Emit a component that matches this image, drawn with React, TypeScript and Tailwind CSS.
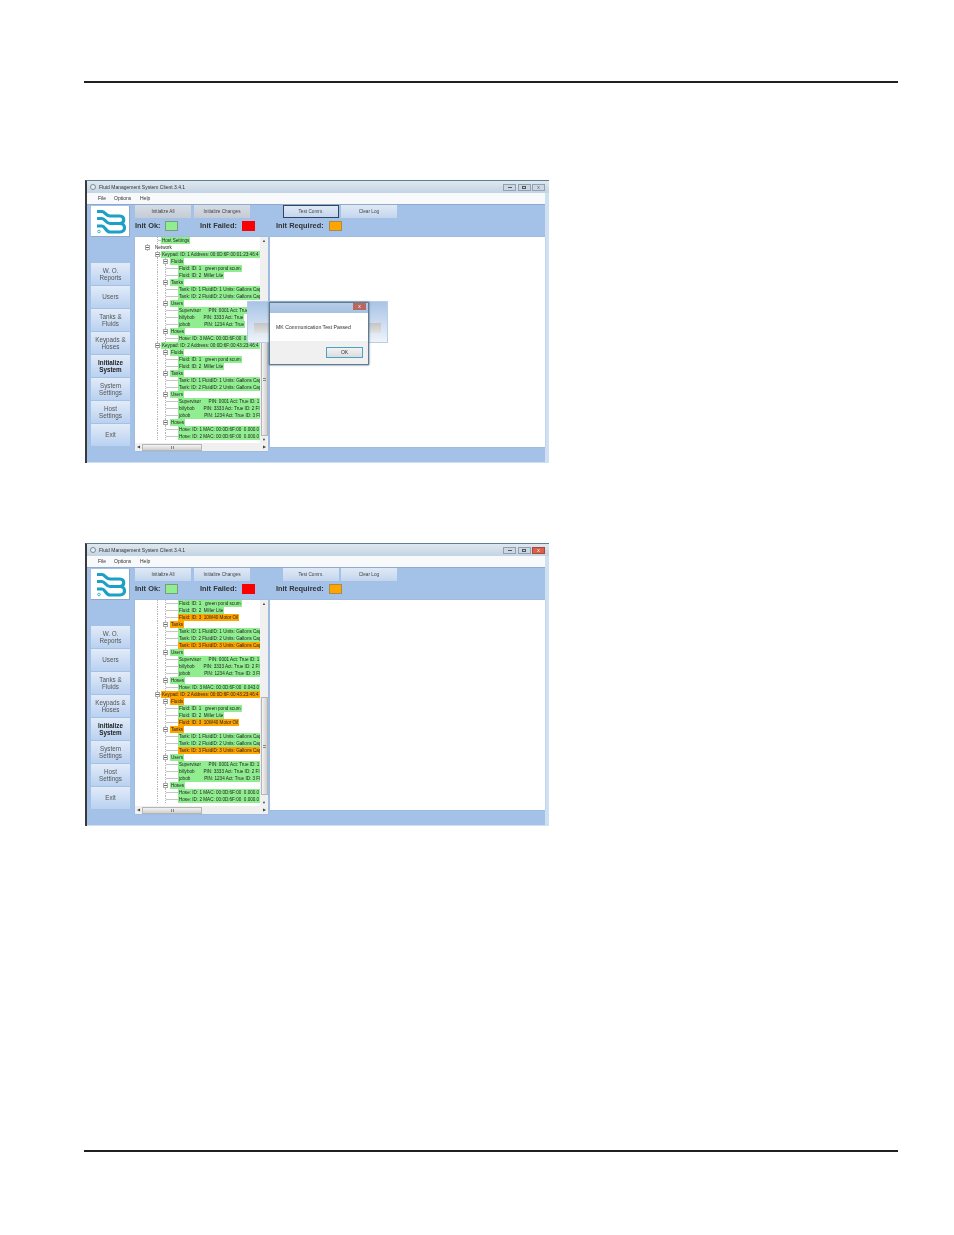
type Row = { lvl: number; text: string; color?: "g" | "o" }

const firstTree: Row[] = [
  { lvl: 1, text: "Host Settings", color: "g" },
  { lvl: 0, text: "Network" },
  { lvl: 1, text: "Keypad: ID: 1 Address: 00:0D:6F:00:01:23:46:4", color: "g" },
  { lvl: 2, text: "Fluids", color: "g" },
  { lvl: 3, text: "Fluid: ID: 1   green pond scum", color: "g" },
  { lvl: 3, text: "Fluid: ID: 2  Miller Lite", color: "g" },
  { lvl: 2, text: "Tanks", color: "g" },
  { lvl: 3, text: "Tank: ID: 1 FluidID: 1 Units: Gallons Cap", color: "g" },
  { lvl: 3, text: "Tank: ID: 2 FluidID: 2 Units: Gallons Cap", color: "g" },
  { lvl: 2, text: "Users", color: "g" },
  { lvl: 3, text: "Supervisor      PIN: 0001 Act: True", color: "g" },
  { lvl: 3, text: "billybob       PIN: 3333 Act: True", color: "g" },
  { lvl: 3, text: "jobob           PIN: 1234 Act: True", color: "g" },
  { lvl: 2, text: "Hoses", color: "g" },
  { lvl: 3, text: "Hose: ID: 3 MAC: 00:0D:6F:00  0.", color: "g" },
  { lvl: 1, text: "Keypad: ID: 2 Address: 00:0D:6F:00:43:23:46:4", color: "g" },
  { lvl: 2, text: "Fluids", color: "g" },
  { lvl: 3, text: "Fluid: ID: 1   green pond scum", color: "g" },
  { lvl: 3, text: "Fluid: ID: 2  Miller Lite", color: "g" },
  { lvl: 2, text: "Tanks", color: "g" },
  { lvl: 3, text: "Tank: ID: 1 FluidID: 1 Units: Gallons Cap", color: "g" },
  { lvl: 3, text: "Tank: ID: 2 FluidID: 2 Units: Gallons Cap", color: "g" },
  { lvl: 2, text: "Users", color: "g" },
  { lvl: 3, text: "Supervisor      PIN: 0001 Act: True ID: 1 Fl", color: "g" },
  { lvl: 3, text: "billybob       PIN: 3333 Act: True ID: 2 Fl", color: "g" },
  { lvl: 3, text: "jobob           PIN: 1234 Act: True ID: 3 Fl", color: "g" },
  { lvl: 2, text: "Hoses", color: "g" },
  { lvl: 3, text: "Hose: ID: 1 MAC: 00:0D:6F:00  0.000.0", color: "g" },
  { lvl: 3, text: "Hose: ID: 2 MAC: 00:0D:6F:00  0.000.0", color: "g" },
]

const secondTree: Row[] = [
  { lvl: 3, text: "Fluid: ID: 1   green pond scum", color: "g" },
  { lvl: 3, text: "Fluid: ID: 2  Miller Lite", color: "g" },
  { lvl: 3, text: "Fluid: ID: 3  10W40 Motor Oil", color: "o" },
  { lvl: 2, text: "Tanks", color: "o" },
  { lvl: 3, text: "Tank: ID: 1 FluidID: 1 Units: Gallons Cap", color: "g" },
  { lvl: 3, text: "Tank: ID: 2 FluidID: 2 Units: Gallons Cap", color: "g" },
  { lvl: 3, text: "Tank: ID: 3 FluidID: 3 Units: Gallons Cap", color: "o" },
  { lvl: 2, text: "Users", color: "g" },
  { lvl: 3, text: "Supervisor      PIN: 0001 Act: True ID: 1 Fl", color: "g" },
  { lvl: 3, text: "billybob       PIN: 3333 Act: True ID: 2 Fl", color: "g" },
  { lvl: 3, text: "jobob           PIN: 1234 Act: True ID: 3 Fl", color: "g" },
  { lvl: 2, text: "Hoses", color: "g" },
  { lvl: 3, text: "Hose: ID: 3 MAC: 00:0D:6F:00  0.043.0", color: "g" },
  { lvl: 1, text: "Keypad: ID: 2 Address: 00:0D:6F:00:43:23:46:4", color: "o" },
  { lvl: 2, text: "Fluids", color: "o" },
  { lvl: 3, text: "Fluid: ID: 1   green pond scum", color: "g" },
  { lvl: 3, text: "Fluid: ID: 2  Miller Lite", color: "g" },
  { lvl: 3, text: "Fluid: ID: 3  10W40 Motor Oil", color: "o" },
  { lvl: 2, text: "Tanks", color: "o" },
  { lvl: 3, text: "Tank: ID: 1 FluidID: 1 Units: Gallons Cap", color: "g" },
  { lvl: 3, text: "Tank: ID: 2 FluidID: 2 Units: Gallons Cap", color: "g" },
  { lvl: 3, text: "Tank: ID: 3 FluidID: 3 Units: Gallons Cap", color: "o" },
  { lvl: 2, text: "Users", color: "g" },
  { lvl: 3, text: "Supervisor      PIN: 0001 Act: True ID: 1 Fl", color: "g" },
  { lvl: 3, text: "billybob       PIN: 3333 Act: True ID: 2 Fl", color: "g" },
  { lvl: 3, text: "jobob           PIN: 1234 Act: True ID: 3 Fl", color: "g" },
  { lvl: 2, text: "Hoses", color: "g" },
  { lvl: 3, text: "Hose: ID: 1 MAC: 00:0D:6F:00  0.000.0", color: "g" },
  { lvl: 3, text: "Hose: ID: 2 MAC: 00:0D:6F:00  0.000.0", color: "g" },
]

const sideButtons = [
  ["W. O.", "Reports"],
  ["Users"],
  ["Tanks &", "Fluids"],
  ["Keypads &", "Hoses"],
  ["Initialize", "System"],
  ["System", "Settings"],
  ["Host", "Settings"],
  ["Exit"],
]

const Logo = () => (
  <div className="w-[39px] h-[31px] bg-white border-b border-r border-[#8fa8c8]">
    <svg viewBox="0 0 39 31" className="w-[39px] h-[31px]" fill="none" stroke="#1ca0c6" strokeWidth="3.2">
      <path d="M6 5.5 H11 C14 5.5 15 10 19 10 H29 C34 10 34 17.5 29 17.5" />
      <path d="M6 12.5 H11 C14 12.5 15 17.5 19 17.5 H29" />
      <path d="M6 20 H11 C14 20 15 26 19 26 H29 C35 26 35 17.5 29 17.5" />
      <circle cx="8" cy="25.5" r="1.3" strokeWidth="0.8" />
    </svg>
  </div>
)

// one tree column: dotted guide line, with a tick or a +/- box on it
const Guide = ({ w, tick, box }: { w: string; tick?: boolean; box?: boolean }) => (
  <div className={`relative shrink-0 h-[7px] border-l border-dotted border-[#b4b4b4] ${w}`}>
    {tick && <div className="mt-[3px] h-px bg-[#c6c6c6]" />}
    {box && (
      <div className="absolute left-[-3px] top-px w-[5px] h-[5px] bg-white border border-[#aaa] flex items-center justify-center">
        <div className="w-[3px] h-px bg-[#666]" />
      </div>
    )}
  </div>
)

const TreeRow = ({ row }: { row: Row }) => {
  const bg = row.color === "g" ? "bg-[#90ee90]" : row.color === "o" ? "bg-[#ffa500]" : ""
  return (
    <div className="flex h-[7px] overflow-hidden">
      {row.lvl === 0 && (
        <>
          <div className="w-[12px] shrink-0" />
          <Guide w="w-[7px]" box />
        </>
      )}
      {row.lvl === 1 && (
        <>
          <div className="w-[22px] shrink-0" />
          <Guide w="w-[4px]" tick box={row.text !== "Host Settings"} />
        </>
      )}
      {row.lvl === 2 && (
        <>
          <div className="w-[22px] shrink-0" />
          <Guide w="w-[8px]" />
          <Guide w="w-[5px]" box />
        </>
      )}
      {row.lvl === 3 && (
        <>
          <div className="w-[22px] shrink-0" />
          <Guide w="w-[8px]" />
          <Guide w="w-[13px]" tick />
        </>
      )}
      <span className={`px-px whitespace-pre text-[4.6px] leading-[7px] text-[#222] ${bg}`}>{row.text}</span>
    </div>
  )
}

const Scrollbars = ({ thumbTop, thumbH }: { thumbTop: string; thumbH: string }) => (
  <div className="flex flex-col w-[8px] h-[206px] bg-[#f0f0f0] items-center">
    <div className="mt-[2px] text-[4px] leading-[4px] text-[#444]">▲</div>
    <div className={`w-[7px] bg-gradient-to-r from-[#f4f4f4] to-[#cfcfcf] border border-[#b5b5b5] flex items-center justify-center ${thumbTop} ${thumbH}`}>
      <div className="w-[3px] h-[3px] border-y border-[#888]" />
    </div>
    <div className="mt-auto mb-[1px] text-[4px] leading-[4px] text-[#444]">▼</div>
  </div>
)

const Window = ({
  tree,
  focused,
  title,
  thumbTop,
  thumbH,
  children,
}: {
  tree: Row[]
  focused?: boolean
  title: string
  thumbTop: string
  thumbH: string
  children?: React.ReactNode
}) => (
  <div className="relative w-[464px] h-[283px] ml-px blur-[0.5px] flex flex-col bg-[#cfe0f3] border-l-2 border-[#3a3a3a] border-t border-t-[#5d7f8f]">
    <div className="h-[12px] flex items-center pl-[3px] pr-[4px] bg-gradient-to-b from-[#dfe8ef] to-[#c3d4e3]">
      <div className="w-[6px] h-[6px] rounded-full bg-[#e8eef2] border border-[#7b8b99] mr-[3px]" />
      <span className="text-[5px] leading-[7px] text-[#333]">{title}</span>
      <div className="ml-auto flex gap-[1.5px]">
        <div className="w-[13px] h-[7px] border border-[#8ea0b2] bg-[#cbd8e4] flex items-center justify-center">
          <div className="w-[4px] h-px bg-[#555]" />
        </div>
        <div className="w-[13px] h-[7px] border border-[#8ea0b2] bg-[#cbd8e4] flex items-center justify-center">
          <div className="w-[4px] h-[3px] border border-[#555]" />
        </div>
        <div
          className={`w-[13px] h-[7px] border flex items-center justify-center text-[5px] leading-none ${
            focused ? "border-[#8ea0b2] bg-[#cbd8e4] text-[#555]" : "border-[#a8493a] bg-[#d9614c] text-white"
          }`}
        >
          x
        </div>
      </div>
    </div>
    <div className="h-[11px] flex items-center bg-[#f8f9fb] mr-[4px] pl-[11px] text-[5px] text-[#333]">
      <span className="w-[16px]">File</span>
      <span className="w-[26px]">Options</span>
      <span>Help</span>
    </div>
    <div className="flex flex-1 mr-[4px] mb-px pl-[4px] bg-[#a4c2e8] border-t border-[#8eaacd]">
      <div className="w-[39px] shrink-0 pt-[1px]">
        <Logo />
        <div className="mt-[26px] flex flex-col gap-[1px]">
          {sideButtons.map((lines) => (
            <div
              key={lines[0]}
              className={`h-[22px] flex flex-col items-center justify-center bg-gradient-to-b from-[#e2ebf8] to-[#b9d1f0] text-[6.3px] leading-[7.5px] ${
                lines[0] === "Initialize" ? "font-bold text-[#222]" : "text-[#555]"
              }`}
            >
              {lines.map((l) => (
                <span key={l}>{l}</span>
              ))}
            </div>
          ))}
        </div>
      </div>
      <div className="ml-[5px] flex-1 flex flex-col">
        <div className="h-[13px] flex text-[4.7px] text-[#444]">
          <div className={`w-[56px] flex items-center justify-center bg-gradient-to-b ${focused ? "from-[#d6dde6] to-[#c5ccd6]" : "from-[#e0e9f5] to-[#c3d6ee]"}`}>
            Initialize All
          </div>
          <div className={`ml-[3px] w-[56px] flex items-center justify-center bg-gradient-to-b ${focused ? "from-[#d6dde6] to-[#c5ccd6]" : "from-[#e0e9f5] to-[#c3d6ee]"}`}>
            Initialize Changes
          </div>
          <div
            className={`ml-[33px] w-[56px] flex items-center justify-center bg-gradient-to-b from-[#e0e9f5] to-[#c3d6ee] ${
              focused ? "border border-[#2d4763]" : ""
            }`}
          >
            Test Comm.
          </div>
          <div className="ml-[2px] w-[56px] flex items-center justify-center bg-gradient-to-b from-[#e0e9f5] to-[#c3d6ee]">
            Clear Log
          </div>
        </div>
        <div className="mt-[3px] h-[10px] flex items-center text-[7.4px] font-bold text-[#333]">
          <span className="w-[30px]">Init Ok:</span>
          <div className="w-[13px] h-[10px] bg-[#90ee90] border border-[#7d9a7d]" />
          <span className="ml-[22px] w-[42px]">Init Failed:</span>
          <div className="w-[13px] h-[10px] bg-[#fa0000]" />
          <span className="ml-[21px] w-[53px]">Init Required:</span>
          <div className="w-[13px] h-[10px] bg-[#ffa500] border border-[#a98a4a]" />
        </div>
        <div className="mt-[6px] flex">
          <div className="w-[133px] h-[214px] bg-white flex flex-col shadow-[0_0_1px_#8899aa]">
            <div className="flex h-[206px]">
              <div className="w-[125px] overflow-hidden">
                {tree.map((row, i) => (
                  <TreeRow key={i} row={row} />
                ))}
              </div>
              <Scrollbars thumbTop={thumbTop} thumbH={thumbH} />
            </div>
            <div className="h-[8px] flex items-center bg-[#f0f0f0] text-[4px] text-[#444]">
              <span className="w-[7px] text-center">◀</span>
              <div className="w-[60px] h-[7px] bg-gradient-to-b from-[#f4f4f4] to-[#cfcfcf] border border-[#b5b5b5] flex items-center justify-center">
                <div className="w-[3px] h-[3px] border-x border-[#888]" />
              </div>
              <span className="ml-auto w-[7px] text-center">▶</span>
            </div>
          </div>
          <div className="ml-[2px] w-[275px] h-[210px] bg-white shadow-[0_0_1px_#8899aa]" />
        </div>
      </div>
    </div>
    {children}
  </div>
)

const Dialog = () => (
  <>
    <div className="absolute left-[160px] top-[120px] w-[141px] h-[42px] bg-gradient-to-b from-[#a9c4e6] to-[#eef3fa] border border-[#b9cde6]">
      <div className="mt-[21px] mx-[6px] h-[10px] bg-gradient-to-b from-[#c4c4c4] to-[#e2e2e2]" />
    </div>
    <div className="absolute left-[182px] top-[121px] w-[100px] h-[63px] bg-white border border-[#5a7d96] flex flex-col shadow-[0_0_2px_#456]">
      <div className="h-[10px] flex justify-end pr-[2px] bg-gradient-to-b from-[#b7cde6] to-[#a6c1e3]">
        <div className="w-[13px] h-[7px] bg-[#b9685f] text-white text-[5px] leading-[7px] text-center">x</div>
      </div>
      <div className="flex-1 pl-[6px] pt-[11px] text-[5.2px] leading-[7px] text-[#333]">MK Communication Test Passed</div>
      <div className="h-[23px] flex justify-end items-center pr-[5px] bg-[#f0f0f0]">
        <div className="w-[37px] h-[11px] bg-gradient-to-b from-[#f2f2f2] to-[#dcdcdc] border border-[#4aa3c4] flex items-center justify-center text-[5px] text-[#333]">
          OK
        </div>
      </div>
    </div>
  </>
)

export default function App() {
  return (
    <div className="w-[954px] h-[1235px] bg-white pl-[84px] pt-[81px] font-['Liberation_Sans',Arial,sans-serif]">
      <div className="w-[814px] h-[2px] bg-[#231f20]" />
      <div className="mt-[97px]">
        <Window tree={firstTree} focused title="Fluid Management System Client 3.4.1" thumbTop="mt-[79px]" thumbH="h-[114px]">
          <Dialog />
        </Window>
      </div>
      <div className="mt-[80px]">
        <Window tree={secondTree} title="Fluid Management System Client 3.4.1" thumbTop="mt-[91px]" thumbH="h-[98px]" />
      </div>
      <div className="mt-[324px] w-[814px] h-[2px] bg-[#231f20]" />
    </div>
  )
}
